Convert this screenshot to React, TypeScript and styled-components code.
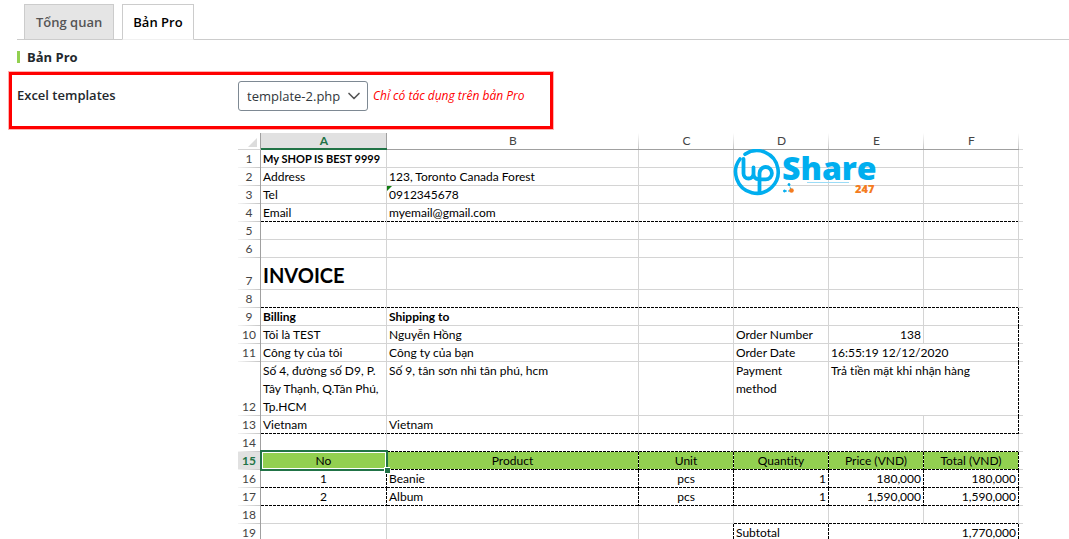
import React from "react";
import styled, { createGlobalStyle, css } from "styled-components";
import { ChevronDown } from "lucide-react";

const uiFont = `"Open Sans", "Noto Sans", sans-serif`;
const sheetFont = `Lato, "Open Sans", sans-serif`;

const GlobalStyle = createGlobalStyle`
  *, *::before, *::after { box-sizing: border-box; }
  body {
    margin: 0;
    background: #fff;
    color: #23282d;
    font-family: ${uiFont};
    font-size: 13px;
  }
`;

const Page = styled.main`
  padding-top: 4px;
`;

const Tabs = styled.nav`
  display: flex;
  gap: 8px;
  margin-left: 17px;
  padding-left: 7px;
  border-bottom: 1px solid #ccc;
`;

const Tab = styled.a<{ $active?: boolean }>`
  padding: 5px ${(p) => (p.$active ? 10 : 11)}px;
  margin-bottom: -1px;
  border: 1px solid #ccc;
  border-bottom-color: ${(p) => (p.$active ? "#f1f1f1" : "#ccc")};
  background: ${(p) => (p.$active ? "#fff" : "#e5e5e5")};
  color: ${(p) => (p.$active ? "#000" : "#555")};
  font-size: 13px;
  font-weight: 600;
  line-height: 24px;
  text-decoration: none;
`;

const SectionTitle = styled.h2`
  display: flex;
  align-items: center;
  gap: 7px;
  margin: 7px 0 5px 17px;
  font-size: 13px;
  font-weight: 700;
  line-height: 20px;

  &::before {
    content: "";
    width: 3px;
    height: 12px;
    background: #92d050;
  }
`;

const Setting = styled.div`
  display: flex;
  align-items: flex-start;
  width: fit-content;
  margin-left: 9px;
  padding: 6px 25px 15px 5px;
  border: 3px solid #f00;
  box-shadow: 0 0 0 1px rgba(255, 0, 0, 0.3);
`;

const SettingLabel = styled.label`
  width: 221px;
  font-size: 13px;
  font-weight: 600;
  line-height: 28px;
`;

const SelectBox = styled.span`
  position: relative;
  display: flex;
  color: #555;

  svg {
    position: absolute;
    right: 4px;
    top: 5px;
    pointer-events: none;
  }
`;

const Select = styled.select`
  appearance: none;
  width: 130px;
  height: 30px;
  padding: 0 24px 0 8px;
  border: 1px solid #7e8993;
  border-radius: 3px;
  background: #fff;
  color: #32373c;
  font-family: ${uiFont};
  font-size: 13px;
`;

const Hint = styled.em`
  margin-left: 5px;
  color: #f00;
  font-size: 12px;
  line-height: 30px;
`;

const Sheet = styled.table`
  width: 785px;
  margin: 4px 0 0 238px;
  table-layout: fixed;
  border-collapse: separate;
  border-spacing: 0;
  color: #000;
  font-family: ${sheetFont};
  font-size: 12px;
  font-variant-ligatures: none;
  line-height: 18px;
`;

const Col = styled.col<{ $w: number }>`
  width: ${(p) => p.$w}px;
`;

const ColumnHead = styled.th<{ $selected?: boolean }>`
  height: 17px;
  padding: 1px 0 0;
  border-bottom: 1px solid #a0a0a0;
  background: linear-gradient(#fff, #c6c6c6) right / 1px 100% no-repeat;
  color: #444;
  font-weight: 400;
  line-height: 13px;
  text-align: center;
  vertical-align: top;

  ${(p) =>
    p.$selected &&
    css`
      border-bottom: 2px solid #217346;
      background: linear-gradient(#a0a0a0, #a0a0a0) right / 1px 100% no-repeat #e1e1e1;
      color: #217346;
      font-weight: 700;
    `}
`;

const Corner = styled.td`
  height: 17px;
  padding: 0;
  border-right: 1px solid #a0a0a0;
  border-bottom: 1px solid #d4d4d4;

  svg {
    display: block;
    margin: 2px 3px 0 auto;
  }
`;

const RowHead = styled.th<{ $h: number; $selected?: boolean }>`
  height: ${(p) => p.$h}px;
  padding: 0;
  border-right: 1px solid #a0a0a0;
  background: linear-gradient(90deg, #f4f4f4, #c6c6c6) bottom / 100% 1px no-repeat;
  color: #444;
  font-size: 12px;
  font-weight: 400;
  line-height: 18px;
  text-align: center;
  vertical-align: bottom;

  ${(p) =>
    p.$selected &&
    css`
      background-color: #e1e1e1;
      color: #217346;
      font-weight: 700;
    `}
`;

type Line = "grid" | "dash" | "none";
type Look = "bold" | "banner" | "title" | "head";

const solid = "linear-gradient(#d4d4d4, #d4d4d4)";
const clear = "linear-gradient(transparent, transparent)";
const rule = (line: Line, angle: string) =>
  line === "dash"
    ? `repeating-linear-gradient(${angle}, #000 0 3px, #fff 3px 4px)`
    : line === "grid"
      ? solid
      : clear;

const looks = {
  bold: css`
    font-weight: 700;
  `,
  banner: css`
    font-size: 11px;
    font-weight: 700;
  `,
  title: css`
    font-size: 20px;
    font-weight: 700;
    line-height: 30px;
    vertical-align: bottom;
  `,
  head: css`
    background-color: #92d050;
  `,
};

const Cell = styled.td<{
  $right: Line;
  $bottom: Line;
  $align?: "left" | "center" | "right";
  $look?: Look;
}>`
  position: relative;
  padding: 0 3px 0 2px;
  background-image: ${(p) => rule(p.$right, "180deg")}, ${(p) => rule(p.$bottom, "90deg")};
  background-position: right top, left bottom;
  background-size: 1px 100%, 100% 1px;
  background-repeat: no-repeat;
  text-align: ${(p) => p.$align ?? "left"};
  vertical-align: top;
  white-space: pre;

  ${(p) => p.$look && looks[p.$look]}
`;

const TextFlag = styled.span`
  position: absolute;
  top: 0;
  left: 0;
  border-top: 5px solid #107c10;
  border-right: 5px solid transparent;
`;

const Selection = styled.span`
  position: absolute;
  z-index: 1;
  inset: -2px -1px -1px -1px;
  border: 2px solid #217346;
  box-shadow: inset 0 0 0 1px #fff;

  &::after {
    content: "";
    position: absolute;
    right: -4px;
    bottom: -4px;
    width: 6px;
    height: 6px;
    border-top: 1px solid #fff;
    border-left: 1px solid #fff;
    background: #217346;
  }
`;

const Brand = styled.svg`
  position: absolute;
  z-index: 1;
  top: -1px;
  left: -1px;
`;

function Logo() {
  return (
    <Brand width="146" height="50" viewBox="0 0 146 50" role="img" aria-label="Up Share 247">
      <g fill="none" stroke="#00aeef" strokeLinecap="round" strokeLinejoin="round">
        <path strokeWidth="3.600" d="M12 5.300A21.300 21.300 0 1 1 7 10" />
        <path strokeWidth="3.800" d="M10.500 10V24.500a5 5 0 0 0 10 0V18.500M20.500 24.500a5 5 0 0 0 6 5.500" />
        <path strokeWidth="3.800" d="M26.500 44V24.200a6.200 6.200 0 1 1 6.200 6.200H27" />
      </g>
      <text x="49" y="31" fill="#00aeef" fontFamily="Open Sans" fontWeight="800" fontSize="32">
        Share
      </text>
      <path d="M74 33.500h42" stroke="#9bdcf7" strokeWidth="1" />
      <g stroke="#00aeef" strokeWidth="1" fill="#00aeef">
        <path d="M56 35.500l2 5M52 42h6" strokeDasharray="2 1" />
        <circle cx="56" cy="35.500" r="1" />
        <circle cx="51.500" cy="42" r="1" />
      </g>
      <circle cx="58.500" cy="41.500" r="2.300" fill="#f47b20" />
      <text x="122" y="44" fill="#f47b20" fontFamily="Open Sans" fontWeight="800" fontSize="11">
        247
      </text>
    </Brand>
  );
}

type CellData = {
  text?: React.ReactNode;
  right?: Line;
  bottom?: Line;
  align?: "left" | "center" | "right";
  look?: Look;
  span?: number;
};
type RowData = { n: number; h?: number; bottom?: Line; selected?: boolean; cells: CellData[] };

const blank = (count: number, cell: CellData = {}): CellData[] => Array(count).fill(cell);
const head = (text: React.ReactNode): CellData => ({ text, look: "head", align: "center", right: "dash" });
const product = (no: string, name: string, price: string): CellData[] => [
  { text: no, align: "center", right: "dash" },
  { text: name, right: "dash" },
  { text: "pcs", align: "center", right: "dash" },
  { text: "1", align: "right", right: "dash" },
  { text: price, align: "right", right: "dash" },
  { text: price, align: "right", right: "dash" },
];

const rows: RowData[] = [
  { n: 1, cells: [{ text: "My SHOP IS BEST 9999", look: "banner" }, {}, {}, { text: <Logo /> }, {}, {}] },
  { n: 2, cells: [{ text: "Address" }, { text: "123, Toronto Canada Forest" }, ...blank(4)] },
  { n: 3, cells: [{ text: "Tel" }, { text: <><TextFlag />0912345678</> }, ...blank(4)] },
  { n: 4, bottom: "dash", cells: [{ text: "Email" }, { text: "myemail@gmail.com" }, ...blank(4)] },
  { n: 5, cells: blank(6) },
  { n: 6, cells: blank(6) },
  { n: 7, h: 32, cells: [{ text: "INVOICE", look: "title" }, ...blank(5)] },
  { n: 8, bottom: "dash", cells: blank(6) },
  { n: 9, cells: [{ text: "Billing", look: "bold" }, { text: "Shipping to", look: "bold" }, ...blank(3), { right: "dash" }] },
  {
    n: 10,
    cells: [{ text: "Tôi là TEST" }, { text: "Nguyễn Hồng" }, {}, { text: "Order Number" }, { text: "138", align: "right" }, { right: "dash" }],
  },
  {
    n: 11,
    cells: [{ text: "Công ty của tôi" }, { text: "Công ty của bạn" }, {}, { text: "Order Date" }, { text: "16:55:19 12/12/2020", span: 2, right: "dash" }],
  },
  {
    n: 12,
    h: 54,
    cells: [
      { text: "Số 4, đường số D9, P.\nTây Thạnh, Q.Tân Phú,\nTp.HCM" },
      { text: "Số 9, tân sơn nhì tân phú, hcm" },
      {},
      { text: "Payment\nmethod" },
      { text: "Trả tiền mặt khi nhận hàng", span: 2, right: "dash" },
    ],
  },
  { n: 13, bottom: "dash", cells: [{ text: "Vietnam" }, { text: "Vietnam" }, ...blank(3), { right: "dash" }] },
  { n: 14, bottom: "dash", cells: blank(6) },
  {
    n: 15,
    bottom: "dash",
    selected: true,
    cells: [head(<><Selection />No</>), ...["Product", "Unit", "Quantity", "Price (VND)", "Total (VND)"].map(head)],
  },
  { n: 16, bottom: "dash", cells: product("1", "Beanie", "180,000") },
  { n: 17, bottom: "dash", cells: product("2", "Album", "1,590,000") },
  { n: 18, cells: [...blank(3), ...blank(3, { bottom: "dash" })] },
  {
    n: 19,
    cells: [{}, {}, { right: "dash" }, { text: "Subtotal", right: "dash" }, { text: "1,770,000", align: "right", span: 2, right: "dash" }],
  },
];

export default function App() {
  return (
    <Page>
      <GlobalStyle />
      <Tabs>
        <Tab href="#overview">Tổng quan</Tab>
        <Tab href="#pro" $active aria-current="page">Bản Pro</Tab>
      </Tabs>
      <SectionTitle>Bản Pro</SectionTitle>
      <Setting>
        <SettingLabel htmlFor="template">Excel templates</SettingLabel>
        <SelectBox>
          <Select id="template" defaultValue="template-2.php">
            <option>template-1.php</option>
            <option>template-2.php</option>
          </Select>
          <ChevronDown size={20} strokeWidth={2} />
        </SelectBox>
        <Hint>Chỉ có tác dụng trên bản Pro</Hint>
      </Setting>
      <Sheet>
        <colgroup>
          {[23, 126, 252, 95, 95, 95, 95, 4].map((w, i) => (
            <Col key={i} $w={w} />
          ))}
        </colgroup>
        <thead>
          <tr>
            <Corner>
              <svg width="9" height="9" viewBox="0 0 9 9" aria-hidden="true">
                <path d="M9 0v9H0z" fill="#dcdcdc" />
              </svg>
            </Corner>
            {["A", "B", "C", "D", "E", "F"].map((name) => (
              <ColumnHead key={name} scope="col" $selected={name === "A"}>
                {name}
              </ColumnHead>
            ))}
            <Cell $right="none" $bottom="grid" />
          </tr>
        </thead>
        <tbody>
          {rows.map((row) => (
            <tr key={row.n}>
              <RowHead scope="row" $h={row.h ?? 18} $selected={row.selected}>
                {row.n}
              </RowHead>
              {row.cells.map((cell, i) => (
                <Cell
                  key={i}
                  colSpan={cell.span}
                  $right={cell.right ?? "grid"}
                  $bottom={cell.bottom ?? row.bottom ?? "grid"}
                  $align={cell.align}
                  $look={cell.look}
                >
                  {cell.text}
                </Cell>
              ))}
              <Cell $right="none" $bottom="grid" />
            </tr>
          ))}
        </tbody>
      </Sheet>
    </Page>
  );
}
